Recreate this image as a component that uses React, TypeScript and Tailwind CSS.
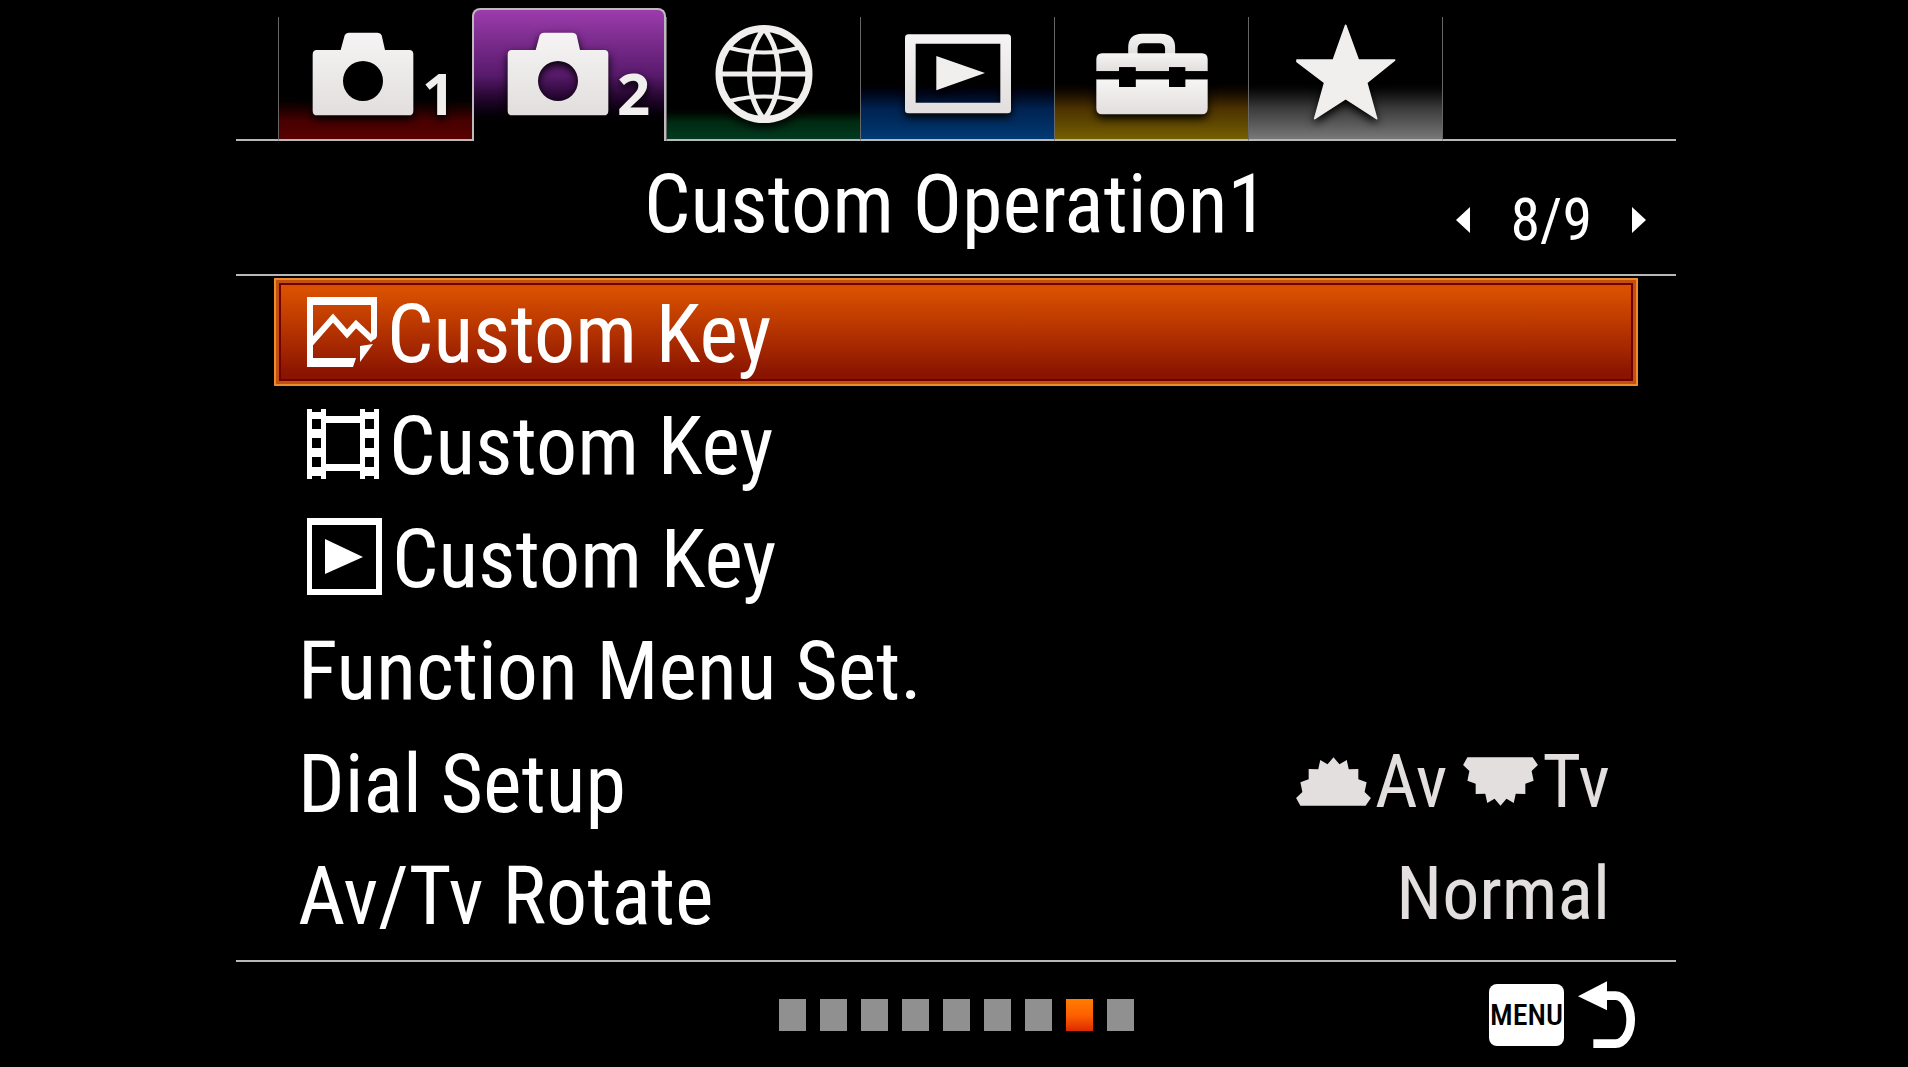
import React, { useState } from 'react';

type Tab = {
  id: string;
  label: string;
  icon: React.ReactNode;
  glow: string;
  number?: string;
};

type MenuItem = {
  id: string;
  label: string;
  icon?: React.ReactNode;
  value?: React.ReactNode;
};

const CameraIcon = () => (
  <svg className="w-[102px] h-[84px] shrink-0" viewBox="0 0 306 252" fill="url(#iconFill)">
    <path
      fillRule="evenodd"
      d="M14 54H86L98 10Q101 2 110 2H197Q206 2 209 10L219 54H292Q304 54 304 67V236Q304 250 290 250H16Q2 250 2 236V68Q2 54 14 54ZM153 87A60 60 0 1 0 153 207A60 60 0 1 0 153 87Z"
    />
  </svg>
);

const GlobeIcon = () => (
  <svg className="w-[98px] h-[100px]" viewBox="0 0 98 100" fill="none" stroke="#f1eeee">
    <ellipse cx="49" cy="50" rx="45" ry="45.500" strokeWidth="7" />
    <path strokeWidth="5" d="M4 50H94" />
    <path strokeWidth="5" d="M48 6C30 30 30 70 48 94M50 6C68 30 68 70 50 94" />
    <path strokeWidth="4" d="M15 24Q49 33 83 24M15 77Q49 68 83 77" />
  </svg>
);

const PlaybackIcon = () => (
  <svg className="w-[106px] h-[80px]" viewBox="0 0 318 240">
    <path
      fill="url(#iconFill)"
      fillRule="evenodd"
      d="M10 1H308Q318 1 318 12V228Q318 238 308 238H10Q0 238 0 228V12Q0 1 10 1ZM32 29V206H286V29Z"
    />
    <path fill="#f1eeee" d="M94 66L240 117L94 169Z" />
  </svg>
);

const ToolboxIcon = () => (
  <svg className="w-[112px] h-[82px]" viewBox="0 0 334 244" fill="url(#iconFill)">
    <path d="M96 62V44Q96 2 138 2H194Q236 2 236 44V62H206V46Q206 30 188 30H142Q124 30 124 46V62Z" />
    <path d="M18 60H316Q333 60 333 78V114H266V102H218V114H118V102H69V114H1V78Q1 60 18 60Z" />
    <path d="M1 138H69V161H118V138H218V161H266V138H333V224Q333 242 316 242H18Q1 242 1 224Z" />
    <path fill="#000" d="M1 114H69V102H118V114H218V102H266V114H333V138H266V161H218V138H118V161H69V138H1Z" />
  </svg>
);

const StarIcon = () => (
  <svg className="w-[100px] h-[96px] mb-1" viewBox="0 0 300 288">
    <path
      fill="#f1eeee"
      stroke="#f1eeee"
      strokeWidth="5"
      strokeLinejoin="round"
      d="M149 4L187 108H296L212 176L242 284L149 224L56 284L86 176L3 113V108H112Z"
    />
  </svg>
);

const StillIcon = () => (
  <svg className="w-[70px] h-[70px]" viewBox="0 0 70 70" fill="#fff">
    <path d="M0 0H70V38Q70 43 64 43V8H6V61H49L46 70H0Z" />
    <path fill="none" stroke="#fff" strokeWidth="6" d="M4 46L26 21L40 37L49 27L66 43" />
    <path d="M53 49L66 47L53 65Z" />
  </svg>
);

const MovieIcon = () => (
  <svg className="w-[72px] h-[70px]" viewBox="0 0 72 70" fill="#fff">
    <path
      fillRule="evenodd"
      d="M0 0H5V3H14V0H19V7H53V0H58V3H67V0H72V70H67V67H58V70H53V62H19V70H14V67H5V70H0ZM19 14V55H53V14ZM5 10V20H14V10ZM5 29V39H14V29ZM5 48V58H14V48ZM58 10V20H67V10ZM58 29V39H67V29ZM58 48V58H67V48Z"
    />
  </svg>
);

const PlayIcon = () => (
  <svg className="w-[75px] h-[77px]" viewBox="0 0 75 77" fill="#fff">
    <path fillRule="evenodd" d="M0 0H75V77H0ZM5 7V71H69V7Z" />
    <path d="M18 21L56 39L18 56Z" />
  </svg>
);

const DialIcon = ({ flipped = false }: { flipped?: boolean }) => (
  <svg className="w-[75px] h-[49px]" viewBox="0 0 226 148" fill="#e3dfdf">
    <path
      transform={flipped ? 'matrix(1 0 0 -1 0 148)' : undefined}
      d="M13 147L0 124L19 106L13 76L38 67V36L67 37L73 9L95 22L113 1L131 22L153 9L159 37L188 36V67L213 76L207 106L226 124L210 147Z"
    />
  </svg>
);

const ReturnIcon = () => (
  <svg className="w-[58px] h-[68px]" viewBox="0 0 174 204">
    <path fill="#fff" d="M0 46L87 1V88Z" />
    <path fill="none" stroke="#fff" strokeWidth="26" d="M84 44H112C136 44 158 76 158 116C158 156 138 188 112 188H46" />
  </svg>
);

const tabs: Tab[] = [
  {
    id: 'camera1',
    label: 'Camera settings 1',
    icon: <CameraIcon />,
    number: '1',
    glow: 'bg-linear-to-t from-[#5a0000] via-[#480000] via-15% to-black to-38%',
  },
  {
    id: 'camera2',
    label: 'Camera settings 2',
    icon: <CameraIcon />,
    number: '2',
    glow: 'bg-linear-to-b from-[#9c3cac] via-[#581a6c] via-50% to-black to-90%',
  },
  {
    id: 'network',
    label: 'Network',
    icon: <GlobeIcon />,
    glow: 'bg-linear-to-t from-[#003a20] via-[#002a12] via-14% to-black to-28%',
  },
  {
    id: 'playback',
    label: 'Playback',
    icon: <PlaybackIcon />,
    glow: 'bg-linear-to-t from-[#003a74] via-[#002250] via-25% to-black to-50%',
  },
  {
    id: 'setup',
    label: 'Setup',
    icon: <ToolboxIcon />,
    glow: 'bg-linear-to-t from-[#746000] via-[#4c3200] via-25% to-black to-50%',
  },
  {
    id: 'mymenu',
    label: 'My Menu',
    icon: <StarIcon />,
    glow: 'bg-linear-to-t from-[#787878] via-[#3c3c3c] via-25% to-black to-50%',
  },
];

const items: MenuItem[] = [
  { id: 'still-key', label: 'Custom Key', icon: <StillIcon /> },
  { id: 'movie-key', label: 'Custom Key', icon: <MovieIcon /> },
  { id: 'play-key', label: 'Custom Key', icon: <PlayIcon /> },
  { id: 'fn', label: 'Function Menu Set.' },
  {
    id: 'dial',
    label: 'Dial Setup',
    value: (
      <>
        <DialIcon />
        <span className="ml-1 mr-4">Av</span>
        <DialIcon flipped />
        <span className="ml-1">Tv</span>
      </>
    ),
  },
  { id: 'rotate', label: 'Av/Tv Rotate', value: 'Normal' },
];

const pages = [1, 2, 3, 4, 5, 6, 7, 8, 9];

const TabButton = ({ tab, active, onClick }: { tab: Tab; active: boolean; onClick: () => void }) => (
  <button
    type="button"
    aria-label={tab.label}
    onClick={onClick}
    className={`flex w-[194px] items-center ${tab.glow} ${tab.number ? 'pl-[33px]' : 'justify-center'} ${
      active
        ? 'h-[133px] rounded-t-lg border-2 border-b-0 border-[#c0b8c0] pb-1'
        : 'h-[124px] border-b-2 border-l border-b-[#b8b8b8] border-l-[#666] pb-2'
    }`}
  >
    <span className="flex items-end gap-2 drop-shadow-[0_4px_4px_#000]">
      {tab.icon}
      {tab.number && (
        <span className="font-['Open_Sans',sans-serif] text-[58px] leading-[46px] font-bold text-[#f1eeee]">
          {tab.number}
        </span>
      )}
    </span>
  </button>
);

const MenuRow = ({ item, selected, onClick }: { item: MenuItem; selected: boolean; onClick: () => void }) => (
  <button
    type="button"
    onClick={onClick}
    className={`flex h-[108px] w-full items-center justify-between border-2 pr-[26px] pl-[22px] ${
      selected
        ? 'border-[#ee8a2a] bg-linear-to-b from-[#d85000] from-10% via-[#b43200] via-50% to-[#8a1400] to-90% shadow-[inset_0_0_0_3px_#c2500e,inset_0_0_0_5px_#700000]'
        : 'border-transparent'
    }`}
  >
    <span className="flex items-center gap-[10px]">
      {item.icon && <span className="ml-[9px]">{item.icon}</span>}
      <span className="pt-1 text-[82px] leading-none">{item.label}</span>
    </span>
    {item.value && (
      <span className="flex items-center text-[74px] leading-none text-[#e3dfdf]">{item.value}</span>
    )}
  </button>
);

const App = () => {
  const [activeTab, setActiveTab] = useState('camera2');
  const [selected, setSelected] = useState('still-key');
  const [page, setPage] = useState(8);

  return (
    <div className="min-h-screen bg-black pl-1 font-['Roboto_Condensed',sans-serif] text-white">
      {/* Shared icon shading */}
      <svg className="absolute size-0" aria-hidden="true">
        <defs>
          <linearGradient id="iconFill" x1="0" y1="0" x2="0" y2="1">
            <stop offset="0" stopColor="#f6f4f4" />
            <stop offset="1" stopColor="#e2dede" />
          </linearGradient>
        </defs>
      </svg>

      <div className="mx-auto flex min-h-screen w-full max-w-[1440px] flex-col">
        {/* Tabs */}
        <nav className="flex items-end pt-2">
          <div className="w-[42px] border-b-2 border-[#b8b8b8]" />
          {tabs.map((tab) => (
            <TabButton key={tab.id} tab={tab} active={tab.id === activeTab} onClick={() => setActiveTab(tab.id)} />
          ))}
          <div className="h-[124px] flex-1 border-b-2 border-l border-b-[#b8b8b8] border-l-[#666]" />
        </nav>

        {/* Title and page counter */}
        <header className="grid h-[135px] grid-cols-[1fr_auto_1fr] items-center border-b-2 border-[#b8b8b8]">
          <h1 className="col-start-2 pb-2 text-[82px] leading-none">Custom Operation1</h1>
          <div className="flex items-center justify-end gap-10 pt-6 pr-[30px]">
            <button type="button" aria-label="Previous page" onClick={() => setPage(Math.max(1, page - 1))}>
              <svg className="h-[26px] w-[14px]" viewBox="0 0 14 26" fill="#fff">
                <path d="M14 0V26L0 13Z" />
              </svg>
            </button>
            <span className="text-[60px] leading-none">
              {page}/{pages.length}
            </span>
            <button type="button" aria-label="Next page" onClick={() => setPage(Math.min(pages.length, page + 1))}>
              <svg className="h-[26px] w-[14px]" viewBox="0 0 14 26" fill="#fff">
                <path d="M0 0V26L14 13Z" />
              </svg>
            </button>
          </div>
        </header>

        {/* Menu items */}
        <main className="flex flex-1 flex-col justify-between px-[38px] pt-[2px] pb-3">
          {items.map((item) => (
            <MenuRow
              key={item.id}
              item={item}
              selected={item.id === selected}
              onClick={() => setSelected(item.id)}
            />
          ))}
        </main>

        {/* Footer */}
        <footer className="grid h-[107px] grid-cols-[1fr_auto_1fr] items-center border-t-2 border-[#b8b8b8]">
          <div className="col-start-2 flex gap-[14px]">
            {pages.map((p) => (
              <button
                key={p}
                type="button"
                aria-label={`Page ${p}`}
                onClick={() => setPage(p)}
                className={`h-8 w-[27px] ${
                  p === page ? 'bg-linear-to-b from-[#ff7c00] via-[#ff6000] to-[#dc2800]' : 'bg-[#909090]'
                }`}
              />
            ))}
          </div>
          <div className="flex items-center justify-end gap-[14px] pr-10">
            <button
              type="button"
              className="h-[62px] w-[75px] rounded-lg bg-white text-center text-[30px] leading-none font-medium text-black"
            >
              MENU
            </button>
            <button type="button" aria-label="Back">
              <ReturnIcon />
            </button>
          </div>
        </footer>
      </div>
    </div>
  );
};

export default App;
